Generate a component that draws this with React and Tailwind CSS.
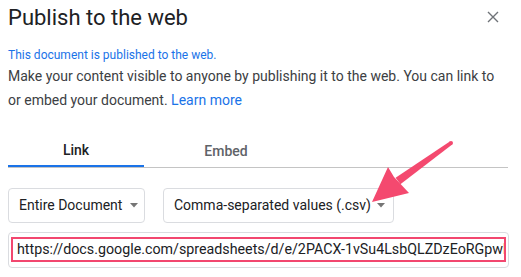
import React from 'react';

const Caret = () => (
  <svg width="8" height="5" viewBox="0 0 8 5" className="shrink-0">
    <path d="M0 0h8L4 4.5z" fill="#757575" />
  </svg>
);

const App = () => {
  return (
    <div
      className="relative w-[521px] h-[277px] overflow-hidden bg-white"
      style={{ fontFamily: 'Roboto, "Liberation Sans", sans-serif' }}
    >
      <div className="flex flex-col px-2">
        {/* header */}
        <div className="flex items-center justify-between h-[28px] mt-[4px]">
          <h1 className="text-[22px] leading-[28px] text-[#202124]">Publish to the web</h1>
          <svg width="12" height="12" viewBox="0 0 12 12" className="mr-[14px] mt-[-2px]">
            <path d="M1 1l10 10M11 1L1 11" stroke="#6f7378" strokeWidth="1.4" />
          </svg>
        </div>

        <p className="mt-[15px] text-[12px] leading-[16px] text-[#1a73e8]">
          This document is published to the web.
        </p>

        <p className="mt-[1px] text-[14px] leading-[24px] text-[#3c4043] pr-2">
          Make your content visible to anyone by publishing it to the web. You can link to
          or embed your document. <span className="text-[#1a73e8]">Learn more</span>
        </p>

        {/* tabs */}
        <div className="flex mt-[24px] border-b border-[#c4c4c4] w-[500px]">
          <div className="w-[136px] h-[31px] flex items-center justify-center text-[14px] font-medium text-[#202124] border-b-2 border-[#1a73e8] -mb-px">
            Link
          </div>
          <div className="w-[164px] h-[31px] flex items-center justify-center text-[14px] font-medium text-[#5f6368]">
            Embed
          </div>
        </div>

        {/* selects */}
        <div className="flex gap-[18px] mt-[20px]">
          <div className="w-[137px] h-[35px] flex items-center gap-[8px] pl-[10px] border border-[#dadce0] rounded-[4px] text-[14px] text-[#202124]">
            Entire Document
            <Caret />
          </div>
          <div className="w-[231px] h-[35px] flex items-center gap-[6px] pl-[10px] border border-[#dadce0] rounded-[4px] text-[14px] text-[#202124]">
            Comma-separated values (.csv)
            <Caret />
          </div>
        </div>

        {/* url */}
        <div className="mt-[9px] w-[501px] h-[36px] border border-[#dadce0] rounded-[4px] p-[2px] pt-[4px]">
          <div className="h-[25px] border-[2.5px] border-[#f2476f] flex items-center pl-[4px] overflow-hidden whitespace-nowrap text-[14.25px] text-[#202124]">
            https://docs.google.com/spreadsheets/d/e/2PACX-1vSu4LsbQLZDzEoRGpwhZ7Hk
          </div>
        </div>
      </div>

      {/* annotation arrow */}
      <svg className="absolute inset-0 pointer-events-none" width="521" height="277">
        <polygon points="452.2,144.6 449.8,141.4 395.6,177.8 400.4,184.2" fill="#f4496f" />
        <circle cx="451" cy="143" r="2" fill="#f4496f" />
        <polygon points="372,202 388,167 394,177 409,193" fill="#f4496f" />
      </svg>
    </div>
  );
};

export default App;
